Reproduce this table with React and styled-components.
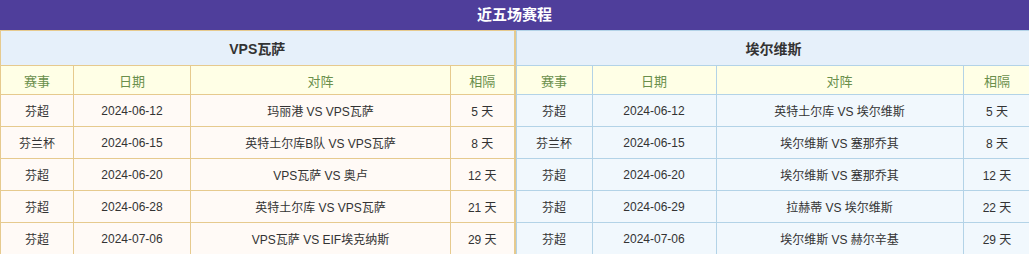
import React from 'react'
import styled, { createGlobalStyle } from 'styled-components'

const left = {
  team: 'VPS瓦萨',
  cols: [73, 117, 260, 64],
  width: 514,
  edge: 2,
  border: '#e6ca8e',
  body: '#fffaf6',
  rows: [
    ['芬超', '2024-06-12', '玛丽港 VS VPS瓦萨', '5 天'],
    ['芬兰杯', '2024-06-15', '英特土尔库B队 VS VPS瓦萨', '8 天'],
    ['芬超', '2024-06-20', 'VPS瓦萨 VS 奥卢', '12 天'],
    ['芬超', '2024-06-28', '英特土尔库 VS VPS瓦萨', '21 天'],
    ['芬超', '2024-07-06', 'VPS瓦萨 VS EIF埃克纳斯', '29 天'],
  ],
}

const right = {
  team: '埃尔维斯',
  cols: [76, 124, 247, 68],
  width: 515,
  edge: 1,
  border: '#b3d3e7',
  body: '#f1f8fd',
  rows: [
    ['芬超', '2024-06-12', '英特土尔库 VS 埃尔维斯', '5 天'],
    ['芬兰杯', '2024-06-15', '埃尔维斯 VS 塞那乔其', '8 天'],
    ['芬超', '2024-06-20', '埃尔维斯 VS 塞那乔其', '12 天'],
    ['芬超', '2024-06-29', '拉赫蒂 VS 埃尔维斯', '22 天'],
    ['芬超', '2024-07-06', '埃尔维斯 VS 赫尔辛基', '29 天'],
  ],
}

const heads = ['赛事', '日期', '对阵', '相隔']

const Schedule = ({ data }) => (
  <Table $border={data.border} $width={data.width} $edge={data.edge}>
    <colgroup>
      {data.cols.map((w, i) => (
        <col key={i} style={{ width: w }} />
      ))}
    </colgroup>
    <tbody>
      <TeamRow>
        <TeamCell colSpan={4}>{data.team}</TeamCell>
      </TeamRow>
      <HeadRow>
        {heads.map((h) => (
          <HeadCell key={h}>{h}</HeadCell>
        ))}
      </HeadRow>
      {data.rows.map((r, i) => (
        <BodyRow key={i} $bg={data.body}>
          {r.map((c, j) => (
            <Cell key={j}>{c}</Cell>
          ))}
        </BodyRow>
      ))}
    </tbody>
  </Table>
)

const App = () => (
  <>
    <GlobalStyle />
    <Wrap>
      <Title>近五场赛程</Title>
      <Panels>
        <Schedule data={left} />
        <Schedule data={right} />
      </Panels>
    </Wrap>
  </>
)

const GlobalStyle = createGlobalStyle`
  body {
    margin: 0;
    background: #ffffff;
    font-family: 'Liberation Sans', 'Noto Sans CJK SC', sans-serif;
  }
`

const Wrap = styled.div`
  width: 1029px;
`

const Title = styled.div`
  height: 30px;
  line-height: 30px;
  background: #4f3e9b;
  color: #ffffff;
  font-size: 15px;
  font-weight: bold;
  text-align: center;
`

const Panels = styled.div`
  display: flex;
  align-items: flex-start;
`

const Table = styled.table`
  table-layout: fixed;
  border-collapse: collapse;
  width: ${(p) => p.$width}px;
  font-size: 12px;
  color: #333333;

  td {
    border: 1px solid ${(p) => p.$border};
    text-align: center;
    padding: 0;
  }

  td:last-child {
    border-right-width: ${(p) => p.$edge}px;
  }
`

const TeamRow = styled.tr`
  height: 35px;
  background: #e6f0fa;
`

const TeamCell = styled.td`
  font-size: 14px;
  font-weight: bold;
  color: #333333;
`

const HeadRow = styled.tr`
  height: 29px;
  background: #ffffe6;
`

const HeadCell = styled.td`
  color: #6a8f4c;
  font-size: 13px;
`

const BodyRow = styled.tr`
  height: 32px;
  background: ${(p) => p.$bg};
`

const Cell = styled.td`
  font-size: 12px;
`

export default App
